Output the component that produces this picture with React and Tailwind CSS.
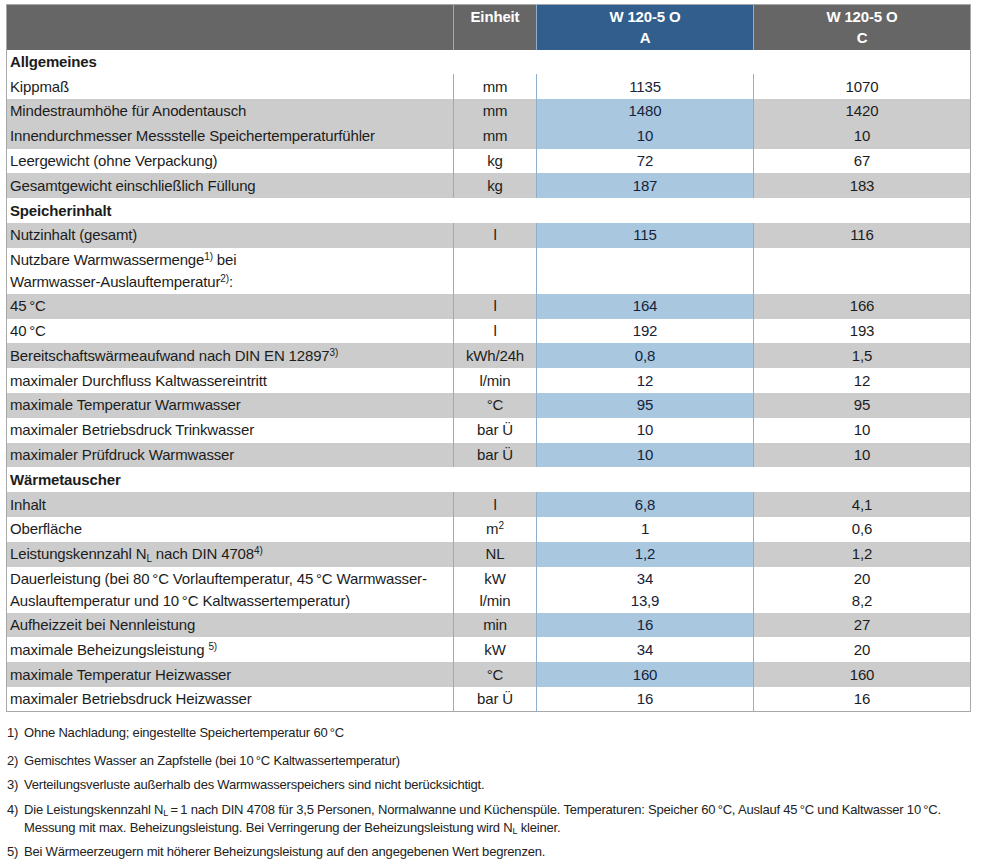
import React from 'react';

const S = ({ children }) => <sup className="text-[10px]">{children}</sup>;

// zeilen der tabelle
const rows = [
  { section: 'Allgemeines' },
  { label: 'Kippmaß', unit: 'mm', a: '1135', c: '1070' },
  { label: 'Mindestraumhöhe für Anodentausch', unit: 'mm', a: '1480', c: '1420', gray: true },
  { label: 'Innendurchmesser Messstelle Speichertemperaturfühler', unit: 'mm', a: '10', c: '10', gray: true },
  { label: 'Leergewicht (ohne Verpackung)', unit: 'kg', a: '72', c: '67' },
  { label: 'Gesamtgewicht einschließlich Füllung', unit: 'kg', a: '187', c: '183', gray: true },
  { section: 'Speicherinhalt' },
  { label: 'Nutzinhalt (gesamt)', unit: 'l', a: '115', c: '116', gray: true },
  {
    label: (
      <>
        Nutzbare Warmwassermenge<S>1)</S> bei
        <br />
        Warmwasser-Auslauftemperatur<S>2)</S>:
      </>
    ),
    unit: '',
    a: '',
    c: '',
    tall: true,
  },
  { label: '45\u2009°C', unit: 'l', a: '164', c: '166', gray: true },
  { label: '40\u2009°C', unit: 'l', a: '192', c: '193' },
  {
    label: (
      <>
        Bereitschaftswärmeaufwand nach DIN EN 12897<S>3)</S>
      </>
    ),
    unit: 'kWh/24h',
    a: '0,8',
    c: '1,5',
    gray: true,
  },
  { label: 'maximaler Durchfluss Kaltwassereintritt', unit: 'l/min', a: '12', c: '12' },
  { label: 'maximale Temperatur Warmwasser', unit: '°C', a: '95', c: '95', gray: true },
  { label: 'maximaler Betriebsdruck Trinkwasser', unit: 'bar Ü', a: '10', c: '10' },
  { label: 'maximaler Prüfdruck Warmwasser', unit: 'bar Ü', a: '10', c: '10', gray: true },
  { section: 'Wärmetauscher' },
  { label: 'Inhalt', unit: 'l', a: '6,8', c: '4,1', gray: true },
  {
    label: 'Oberfläche',
    unit: (
      <>
        m<S>2</S>
      </>
    ),
    a: '1',
    c: '0,6',
  },
  {
    label: (
      <>
        Leistungskennzahl N<sub className="text-[10px]">L</sub> nach DIN 4708<S>4)</S>
      </>
    ),
    unit: 'NL',
    a: '1,2',
    c: '1,2',
    gray: true,
  },
  {
    label: (
      <>
        Dauerleistung (bei 80&#8201;°C Vorlauftemperatur, 45&#8201;°C Warmwasser-
        <br />
        Auslauftemperatur und 10&#8201;°C Kaltwassertemperatur)
      </>
    ),
    unit: (
      <>
        kW
        <br />
        l/min
      </>
    ),
    a: (
      <>
        34
        <br />
        13,9
      </>
    ),
    c: (
      <>
        20
        <br />
        8,2
      </>
    ),
    tall: true,
  },
  { label: 'Aufheizzeit bei Nennleistung', unit: 'min', a: '16', c: '27', gray: true },
  {
    label: (
      <>
        maximale Beheizungsleistung <S>5)</S>
      </>
    ),
    unit: 'kW',
    a: '34',
    c: '20',
  },
  { label: 'maximale Temperatur Heizwasser', unit: '°C', a: '160', c: '160', gray: true },
  { label: 'maximaler Betriebsdruck Heizwasser', unit: 'bar Ü', a: '16', c: '16' },
];

const notes = [
  ['1)', 'Ohne Nachladung; eingestellte Speichertemperatur 60\u2009°C'],
  ['2)', 'Gemischtes Wasser an Zapfstelle (bei 10\u2009°C Kaltwassertemperatur)'],
  ['3)', 'Verteilungsverluste außerhalb des Warmwasserspeichers sind nicht berücksichtigt.'],
  [
    '4)',
    <>
      Die Leistungskennzahl N<sub className="text-[9px]">L</sub>&#8201;=&#8201;1 nach DIN 4708 für 3,5 Personen,
      Normalwanne und Küchenspüle. Temperaturen: Speicher 60&#8201;°C, Auslauf 45&#8201;°C und Kaltwasser 10&#8201;°C.
      <br />
      Messung mit max. Beheizungsleistung. Bei Verringerung der Beheizungsleistung wird N
      <sub className="text-[9px]">L</sub> kleiner.
    </>,
  ],
  ['5)', 'Bei Wärmeerzeugern mit höherer Beheizungsleistung auf den angegebenen Wert begrenzen.'],
];

export default function App() {
  return (
    <div className="bg-white w-[981px] h-[866px] pt-[4px] pl-[6px] font-['Liberation_Sans',Arial,sans-serif] text-[#1c1c1c]">
      <table className="w-[964px] table-fixed border-collapse border border-[#a8a8a8] text-[15px] tracking-[-0.15px]">
        <colgroup>
          <col className="w-[447px]" />
          <col className="w-[83px]" />
          <col className="w-[217px]" />
          <col className="w-[217px]" />
        </colgroup>
        <thead>
          <tr className="h-[45px] text-white font-bold leading-[21px] align-top">
            <th className="bg-[#666666] border-r border-[#a8a8a8]"></th>
            <th className="bg-[#666666] border-r border-[#8eb0cd] pt-[1px] font-bold">Einheit</th>
            <th className="bg-[#315e8d] border-r border-[#8eb0cd] pt-[1px] font-bold">
              W 120-5 O
              <br />A
            </th>
            <th className="bg-[#666666] pt-[1px] font-bold">
              W 120-5 O
              <br />C
            </th>
          </tr>
        </thead>
        <tbody>
          {rows.map((r, i) =>
            r.section ? (
              <tr key={i} className="h-[24.8px] bg-white">
                <td colSpan={4} className="pl-[3px] font-bold leading-[20px]">
                  {r.section}
                </td>
              </tr>
            ) : (
              <tr
                key={i}
                className={`${r.tall ? 'h-[46px] leading-[22px]' : 'h-[24.8px] leading-[20px]'} ${
                  r.gray ? 'bg-[#cccccc]' : 'bg-white'
                }`}
              >
                <td className="pl-[3px] border-r border-[#a8a8a8] whitespace-nowrap">{r.label}</td>
                <td className="text-center border-r border-[#8eb0cd] whitespace-nowrap">{r.unit}</td>
                <td
                  className={`text-center border-r border-[#8eb0cd] text-[#15233b] ${
                    r.gray ? 'bg-[#a9c8e0]' : 'bg-white'
                  }`}
                >
                  {r.a}
                </td>
                <td className="text-center">{r.c}</td>
              </tr>
            )
          )}
        </tbody>
      </table>

      {/* fussnoten */}
      <div className="mt-[12px] flex flex-col gap-[6.5px] text-[13px] leading-[18px] text-[#222222] tracking-[-0.2px]">
        {notes.map(([n, t], i) => (
          <div key={n} className={`flex ${i === 0 ? 'mb-[3px]' : ''}`}>
            <span className="w-[18px] shrink-0 pl-[1px]">{n}</span>
            <span>{t}</span>
          </div>
        ))}
      </div>
    </div>
  );
}
